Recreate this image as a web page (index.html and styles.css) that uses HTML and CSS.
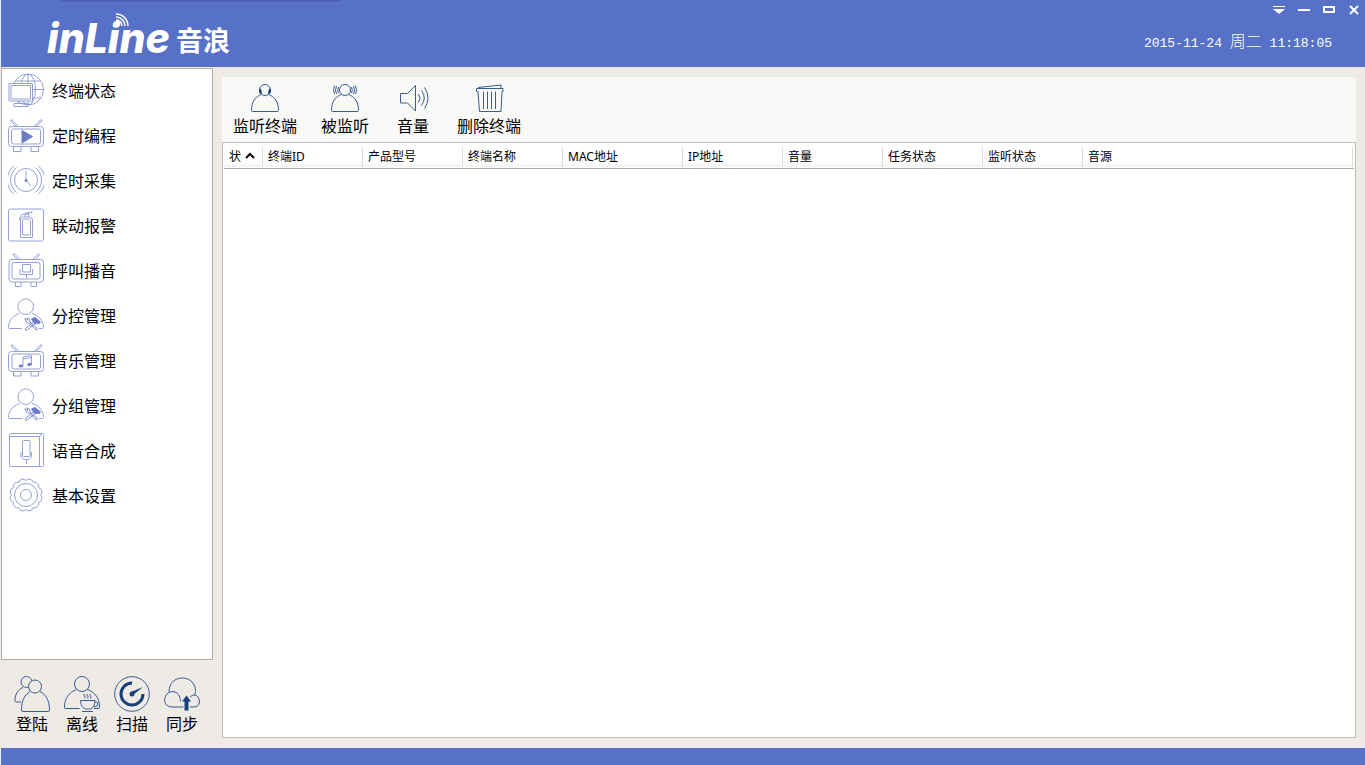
FILE: index.html
```html
<!DOCTYPE html>
<html lang="zh-CN">
<head>
<meta charset="utf-8">
<title>inLine 音浪</title>
<link rel="stylesheet" href="styles.css">
</head>
<body>
<svg class="defs" aria-hidden="true">
  <symbol id="person-tools" viewBox="0 0 36 36">
    <circle cx="17.700" cy="8.700" r="7.800"/>
    <path d="M14 30.500H1.500Q.5 30.500.5 29.500C.5 23 5 17.500 11.500 15.500M24 15.500C31 17.500 35.500 23 35.500 29.500Q35.500 30.500 34.500 30.500H31"/>
    <path class="tool" d="M17 20.500l2.500 2v-2.500q3 .5 2.500 4l7 6q1 2-1 2l-6.500-7q-4 .5-4.500-4.500zM26 23.500l-8.500 7q-1 2 1 2l9-7.500"/>
    <path class="solid" d="M23.500 21l3.500-1.500 5.500 4.500-1 1.500-2.500-.5-2 1z"/>
  </symbol>
</svg>
<header class="titlebar">
  <h1 class="logo">
    <span class="logo-latin">inLine</span><span class="logo-cjk">音浪</span>
    <svg class="logo-waves" viewBox="0 0 14 14" aria-hidden="true"><path d="M1 7a6 6 0 0 1 6 6M1 4a9 9 0 0 1 9 9M1 1a12 12 0 0 1 12 12"/></svg>
  </h1>
  <div class="title-side">
    <div class="window-controls">
      <button aria-label="菜单"><svg viewBox="0 0 12 12"><path d="M0 2.500h12" stroke="#fff"/><path d="M0 5h12L6 10z" fill="#fff"/></svg></button>
      <button aria-label="最小化"><svg viewBox="0 0 12 12"><path d="M0 6h12" stroke="#fff" stroke-width="2"/></svg></button>
      <button aria-label="最大化"><svg viewBox="0 0 12 12"><path d="M1 3h10v5H1z" fill="none" stroke="#fff" stroke-width="2"/></svg></button>
      <button aria-label="关闭"><svg viewBox="0 0 12 12"><path d="M2 2l8 8M10 2l-8 8" stroke="#fff" stroke-width="2"/></svg></button>
    </div>
    <time class="clock" datetime="2015-11-24T11:18:05">2015-11-24 <span class="weekday">周二</span> 11:18:05</time>
  </div>
</header>
<div class="workspace">
  <aside class="side">
    <nav class="menu">
      <a href="#status"><svg viewBox="0 0 36 36"><circle cx="20" cy="16.500" r="15.500"/><ellipse cx="20" cy="16.500" rx="7.500" ry="15.500"/><path d="M20 1v31M7 8h26M5 16.500h31M22 25h11"/><path class="paper" d="M1 10.500h23.500V28H1z"/><path d="M3 12.500h19.500V26H3zM10 28v2.500M16 28v2.500M6 30.500h14v3H6z"/></svg><span>终端状态</span></a>
      <a href="#program"><svg viewBox="0 0 36 36"><rect x=".5" y="8.500" width="35" height="20" rx="3"/><rect x="3.500" y="11" width="29" height="15" rx="2"/><path d="M3.500 1.500L2.500 3l6 5.500M3.500 1.500l7 7M33 1.500L34 3l-6 5.500M33 1.500l-7 7M5.500 28.500v5H13v-5M23 28.500v5h7.500v-5"/><path class="solid" d="M14 12.500l10.500 6L14 25z"/></svg><span>定时编程</span></a>
      <a href="#capture"><svg viewBox="0 0 36 36"><circle cx="18" cy="17" r="11.500"/><path d="M18 8v9l5 6M8.500 4.500a16 16 0 0 0 0 25M6 2.500a19 19 0 0 0 0 29M27.500 4.500a16 16 0 0 1 0 25M30 2.500a19 19 0 0 1 0 29"/><circle class="solid" cx="18" cy="17.500" r="1"/></svg><span>定时采集</span></a>
      <a href="#alarm"><svg viewBox="0 0 36 36"><rect x=".5" y="1" width="35" height="32" rx="2"/><path d="M12.500 29.500V12q0-3 3-3h6q3 0 3 3v17.500zM14.500 27V12.500q0-1.500 2-1.500h4q2 0 2 1.500V27zM17 9V6h3.500v3M11.500 12q0-6 6-6l7-2.500M17 5l7-.5"/></svg><span>联动报警</span></a>
      <a href="#broadcast"><svg viewBox="0 0 36 36"><rect x="1" y="6.500" width="34.500" height="22.500" rx="3"/><rect x="4" y="9.500" width="28" height="16.500" rx="2"/><path d="M6 .5L5 2l4.500 4.500M6 .5l6 6M30.500.5l1 1.500L27 6.500M30.500.5l-6 6M7.500 29v4.500H13V29M23 29v4.500h5.500V29M14.500 11.500h8v7.500h-8zM12 16v5.500h12.500V16M18.500 21.500v4"/></svg><span>呼叫播音</span></a>
      <a href="#subcontrol"><svg viewBox="0 0 36 36"><use href="#person-tools"/></svg><span>分控管理</span></a>
      <a href="#music"><svg viewBox="0 0 36 36"><rect x=".5" y="8.500" width="35" height="20" rx="3"/><rect x="4" y="11" width="28.500" height="15" rx="2"/><path d="M4 1.500L3 3l6 5.500M4 1.500l7 7M33 1.500L34 3l-6 5.500M33 1.500l-7 7M5.500 28.500v4.500H13v-4.500M23 28.500v4.500h7.500v-4.500M15 22.500V14l8.500-1.500V21M15 16l8.500-1.500"/><ellipse class="solid" cx="13" cy="23" rx="2" ry="1"/><ellipse class="solid" cx="21.500" cy="21.500" rx="2" ry="1"/></svg><span>音乐管理</span></a>
      <a href="#groups"><svg viewBox="0 0 36 36"><use href="#person-tools"/></svg><span>分组管理</span></a>
      <a href="#speech"><svg viewBox="0 0 36 36"><rect x="1.500" y=".5" width="34" height="33" rx="1"/><path d="M1.500 3.500h30v30M31.500 3.500L34 1"/><rect x="14.500" y="7.500" width="7.500" height="16" rx="1"/><path d="M13 19v4q0 3.500 5.200 3.500t5.200-3.500v-4M18.500 26.500V31"/></svg><span>语音合成</span></a>
      <a href="#settings"><svg viewBox="0 0 36 36"><path d="M32.500 17A4.200 4.200 0 0 1 30.560 24.250A4.200 4.200 0 0 1 25.250 29.560A4.200 4.200 0 0 1 18 31.500A4.200 4.200 0 0 1 10.750 29.560A4.200 4.200 0 0 1 5.440 24.250A4.200 4.200 0 0 1 3.500 17A4.200 4.200 0 0 1 5.440 9.750A4.200 4.200 0 0 1 10.750 4.440A4.200 4.200 0 0 1 18 2.500A4.200 4.200 0 0 1 25.250 4.440A4.200 4.200 0 0 1 30.560 9.750A4.200 4.200 0 0 1 32.500 17z"/><circle cx="18" cy="17" r="11.500"/><circle cx="18" cy="17" r="5.500"/></svg><span>基本设置</span></a>
    </nav>
    <div class="quick">
      <button><svg viewBox="0 0 36 36"><circle cx="12.500" cy="6" r="5.500"/><path d="M7 26H1.500Q1 26 1 24.500C1 18 4 13.500 9 11.500"/><circle class="cover" cx="21" cy="10.500" r="6.500"/><path d="M16 15.500C11 18.500 7.500 24 7.500 34q0 1.500 1.500 1.500h25q1.500 0 1.500-1.500C35.500 24 31.500 18.500 26 15.500"/></svg><span>登陆</span></button>
      <button><svg viewBox="0 0 36 36"><circle cx="18" cy="8" r="7.500"/><path d="M15.500 32.500h-14q-1 0-1-1.500C.5 22 5 16.500 12.500 13.500M23.500 13.500C31 16.500 35.500 22 35.500 31q0 1.500-1.500 1.500h-4"/><path d="M16.500 24.500H31q0 6.500-4.500 8.500h-5q-5-2-5-8.500zM31 26q3-.5 3 2t-4 3M18 35.500h11M20.500 18q-1.500 1 0 2t0 2.500M23.500 18q-1.500 1 0 2t0 2.500M26.500 18q-1.500 1 0 2t0 2.500"/></svg><span>离线</span></button>
      <button><svg viewBox="0 0 36 36"><circle cx="18" cy="18" r="17.300"/><path class="heavy" d="M18 7a11 11 0 1 0 11 11"/><path class="fill" d="M17 16l12-5-10 8z"/><circle class="fill" cx="18" cy="18" r="2.500"/></svg><span>扫描</span></button>
      <button><svg viewBox="0 0 36 36"><path d="M19.500 31H8Q.5 30.500.5 23.500 1.500 16 9 15.500q7 .5 7.500 10M5 16C5 7 11 2 18.500 2 26 2 32 8 31.500 15.500q0 2-1 3.500M26 21q3-3.500 6.500-1.500Q35.500 21.500 35.500 26 35 31 29.500 31H26"/><path class="fill" d="M22.500 19.500l4.500 6h-2.500v9h-4v-9H18z"/></svg><span>同步</span></button>
    </div>
  </aside>
  <main class="content">
    <div class="toolbar">
      <button><svg viewBox="0 0 32 32"><circle cx="16" cy="8" r="5.500"/><path d="M12.500 12.500C6.500 14.500 2.500 19.500 2.500 28.500q0 1 1 1h25q1 0 1-1C29.500 19.500 25.500 14.500 19.500 12.500"/><path class="fill" d="M10 8l2-1.500 1 5-1.500.5-1.500-2zM22 8l-2-1.500-1 5 1.500.5 1.500-2z"/></svg><span>监听终端</span></button>
      <button><svg viewBox="0 0 32 32"><circle cx="16" cy="8" r="5.500"/><path d="M12.500 12.500C6.500 14.500 2.500 19.500 2.500 28.500q0 1 1 1h25q1 0 1-1C29.500 19.500 25.500 14.500 19.500 12.500M9.500 5q-1.500 3 0 6M7.500 4q-2 4 0 8M5.500 3.500q-2 4.500 0 8.500M22.500 5q1.500 3 0 6M24.500 4q2 4 0 8M26.500 3.500q2 4.500 0 8.500"/></svg><span>被监听</span></button>
      <button><svg viewBox="0 0 32 32"><path d="M3.500 11.500h7l8-8v25.500l-8-8h-7zM21.500 12q3 4 0 8.500M24.500 8.500q5.500 7.500 0 15M27.500 5.500q7 10.500 0 21"/></svg><span>音量</span></button>
      <button><svg viewBox="0 0 32 32"><path d="M3.500 6.500h26.500v3h-1l-1 20H6.500l-1.500-20h-1.500zM5 5.500l23-2.500v3.500M10.500 9.500v17.500M14.500 9.500v17.500M18.500 9.500v17.500M22.500 9.500v17.500"/></svg><span>删除终端</span></button>
    </div>
    <div class="grid">
      <table>
        <colgroup><col class="c-state"><col class="c-std"><col class="c-std"><col class="c-std"><col class="c-mac"><col class="c-std"><col class="c-std"><col class="c-std"><col class="c-std"><col></colgroup>
        <thead><tr>
          <th scope="col" aria-sort="ascending"><div>状<svg class="sort" viewBox="0 0 10 10" aria-hidden="true"><path d="M1 6l4-4 4 4"/></svg></div></th>
          <th scope="col"><div>终端ID</div></th>
          <th scope="col"><div>产品型号</div></th>
          <th scope="col"><div>终端名称</div></th>
          <th scope="col"><div>MAC地址</div></th>
          <th scope="col"><div>IP地址</div></th>
          <th scope="col"><div>音量</div></th>
          <th scope="col"><div>任务状态</div></th>
          <th scope="col"><div>监听状态</div></th>
          <th scope="col"><div>音源</div></th>
        </tr></thead>
        <tbody></tbody>
      </table>
    </div>
  </main>
</div>
<footer class="statusbar"></footer>
</body>
</html>
```
FILE: styles.css
```css
* { box-sizing: border-box; }

body {
  margin: 0;
  padding-left: 1px;
  min-height: 100vh;
  display: flex;
  flex-direction: column;
  background: #eeeae6;
  color: #000;
  font: 16px "Noto Sans", "Noto Sans CJK SC", sans-serif;
}

button {
  margin: 0;
  padding: 0;
  border: 0;
  background: none;
  color: inherit;
  font: inherit;
}

svg { display: block; flex: none; }

.defs { position: absolute; width: 0; height: 0; }

.titlebar {
  position: relative;
  display: flex;
  justify-content: space-between;
  height: 67px;
  overflow: hidden;
  background: #5871c8;
  color: #fff;
}

.titlebar::before {
  content: "";
  position: absolute;
  top: -4px;
  left: 60px;
  width: 280px;
  height: 4px;
  box-shadow: 0 0 3px #2c3f86;
}

.logo {
  position: relative;
  display: flex;
  align-items: flex-start;
  gap: 6px;
  margin: 0;
  padding: 12px 0 0 46px;
}

.logo-latin { font: italic 800 41px/52px Inter, sans-serif; }
.logo-cjk { font: 700 27px/56px "Noto Sans CJK SC", sans-serif; }

.logo-waves {
  position: absolute;
  top: 13px;
  left: 114px;
  width: 14px;
  height: 14px;
  fill: none;
  stroke: #fff;
  stroke-width: 1.5;
}

.title-side {
  display: flex;
  flex-direction: column;
  align-items: flex-end;
}

.window-controls {
  display: flex;
  gap: 13px;
  padding: 4px 5px 0 0;
}

.window-controls svg { width: 12px; height: 12px; }

.clock {
  margin: 17px 33px 0 0;
  font: 13px/20px "Liberation Mono", "Noto Sans CJK SC", monospace;
}

.weekday { font-size: 16px; font-weight: 300; }

.workspace {
  flex: 1;
  display: flex;
  gap: 9px;
  padding-top: 1px;
}

.side {
  display: flex;
  flex-direction: column;
  width: 212px;
}

.menu {
  flex: 1;
  border: 1px solid #b5aca5;
  background: #fff;
}

.menu a {
  display: flex;
  gap: 8px;
  height: 45px;
  padding: 4px 6px;
  color: inherit;
  line-height: 36px;
  text-decoration: none;
}

.menu svg {
  width: 36px;
  height: 36px;
  fill: none;
  stroke: #95a0d6;
}

.menu .paper { fill: #fff; }
.solid { fill: #6c7bc4; stroke: #6c7bc4; }
.tool { stroke: #7f8ccb; }

.quick {
  display: flex;
  padding: 16px 6px 14px;
}

.quick button {
  display: flex;
  flex-direction: column;
  align-items: center;
  gap: 2px;
  width: 50px;
  line-height: 20px;
}

.quick svg,
.toolbar svg {
  width: 36px;
  height: 36px;
  fill: none;
  stroke: #3a5d90;
}

.quick .fill,
.toolbar .fill { fill: #173f7a; stroke: none; }
.quick .heavy { stroke: #173f7a; stroke-width: 3; }
.quick .cover { fill: #eeeae6; }

.content {
  flex: 1;
  display: flex;
  flex-direction: column;
  padding: 9px 9px 10px 0;
}

.toolbar {
  display: flex;
  gap: 24px;
  height: 65px;
  padding: 5px 11px 0;
  background: #f8f8f6;
}

.toolbar button {
  display: flex;
  flex-direction: column;
  align-items: center;
  gap: 2px;
  min-width: 40px;
  line-height: 20px;
}

.toolbar svg { width: 32px; height: 32px; }

.grid {
  flex: 1;
  padding: 0 1px;
  border: 1px solid #bdbdbd;
  background: #fff;
}

table {
  width: 100%;
  table-layout: fixed;
  border-collapse: collapse;
}

.c-state { width: 39px; }
.c-std { width: 100px; }
.c-mac { width: 120px; }

thead { background: linear-gradient(#fff 70%, #f4f4f4); border-bottom: 1px solid #adadad; }

th {
  height: 25px;
  padding: 3px 0 0;
  font-size: 12px;
  font-weight: 400;
  text-align: left;
}

th div {
  display: flex;
  align-items: center;
  gap: 4px;
  height: 20px;
  padding-left: 5px;
  border-right: 1px solid #dcdcdc;
  line-height: 20px;
}

th:last-child { padding-right: 1px; }

.sort {
  width: 10px;
  height: 10px;
  fill: none;
  stroke: #000;
  stroke-width: 2;
}

.statusbar { height: 17px; background: #5871c8; }
```
